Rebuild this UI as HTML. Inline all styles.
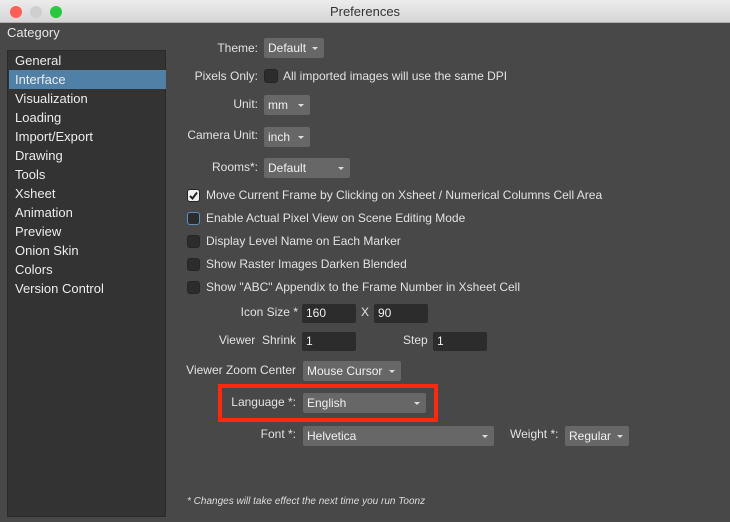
<!DOCTYPE html>
<html><head><style>
*{margin:0;padding:0;box-sizing:border-box}
body{width:730px;height:522px;background:#484848;font-family:"Liberation Sans",sans-serif;font-size:12px;color:#e2e2e2;position:relative;overflow:hidden}
.a{position:absolute;white-space:nowrap}
.tb{left:0;top:0;width:730px;height:23px;background:linear-gradient(#ececec,#d6d6d6);border-bottom:1px solid #b0b0b0;text-align:center;color:#333;font-size:13px;line-height:23px}
.dot{position:absolute;top:6px;width:12px;height:12px;border-radius:50%}
.side{left:7px;top:50px;width:159px;height:467px;background:#333;border:1px solid #2a2a2a}
.it{position:absolute;left:7px;line-height:19px;font-size:13px;color:#ececec}
.sel{position:absolute;left:1px;width:157px;height:19px;top:19px;background:#5180a6}
.lbl{text-align:right;line-height:20px}
.dd{background:#676767;border-radius:2px;height:20px;line-height:20px;padding-left:4px;color:#f0f0f0}
.dd:after{content:"";position:absolute;right:6px;top:9px;border-left:3px solid transparent;border-right:3px solid transparent;border-top:3px solid #ddd}
.in{background:#2c2c2c;border-radius:2px;height:19px;line-height:19px;padding-left:4px;color:#eee}
.cb{width:13px;height:13px;background:#2c2c2c;border-radius:3px;border:1px solid #262626}
.cb.on{background:#eee}
</style></head><body>
<div class="a tb">Preferences</div>
<div class="dot" style="left:10px;background:#fc5f57"></div>
<div class="dot" style="left:30px;background:#cfcfcf"></div>
<div class="dot" style="left:50px;background:#2ac840"></div>
<div class="a" style="left:7px;top:25px;line-height:16px;color:#e6e6e6;font-size:13px">Category</div>
<div class="a side">
<div class="sel"></div>
<div class="it" style="top:0">General</div>
<div class="it" style="top:19px">Interface</div>
<div class="it" style="top:38px">Visualization</div>
<div class="it" style="top:57px">Loading</div>
<div class="it" style="top:76px">Import/Export</div>
<div class="it" style="top:95px">Drawing</div>
<div class="it" style="top:114px">Tools</div>
<div class="it" style="top:133px">Xsheet</div>
<div class="it" style="top:152px">Animation</div>
<div class="it" style="top:171px">Preview</div>
<div class="it" style="top:190px">Onion Skin</div>
<div class="it" style="top:209px">Colors</div>
<div class="it" style="top:228px">Version Control</div>
</div>

<div class="a lbl" style="right:472px;top:38px">Theme:</div>
<div class="a dd" style="left:264px;top:38px;width:60px">Default</div>
<div class="a lbl" style="right:472px;top:66px">Pixels Only:</div>
<div class="a cb" style="left:264px;top:69px;width:14px;height:14px"></div>
<div class="a lbl" style="left:283px;top:66px">All imported images will use the same DPI</div>
<div class="a lbl" style="right:472px;top:94px">Unit:</div>
<div class="a dd" style="left:264px;top:95px;width:46px">mm</div>
<div class="a lbl" style="right:472px;top:125px">Camera Unit:</div>
<div class="a dd" style="left:264px;top:127px;width:46px">inch</div>
<div class="a lbl" style="right:472px;top:157px">Rooms*:</div>
<div class="a dd" style="left:264px;top:158px;width:86px">Default</div>

<div class="a cb on" style="left:187px;top:189px"></div>
<svg class="a" style="left:187px;top:189px" width="13" height="13"><path d="M3 7 L5.5 9.5 L10 3.5" stroke="#222" stroke-width="2" fill="none"/></svg>
<div class="a lbl" style="left:206px;top:185px">Move Current Frame by Clicking on Xsheet / Numerical Columns Cell Area</div>
<div class="a cb" style="left:187px;top:212px;border-color:#5a8ec0"></div>
<div class="a lbl" style="left:206px;top:208px">Enable Actual Pixel View on Scene Editing Mode</div>
<div class="a cb" style="left:187px;top:235px"></div>
<div class="a lbl" style="left:206px;top:231px">Display Level Name on Each Marker</div>
<div class="a cb" style="left:187px;top:258px"></div>
<div class="a lbl" style="left:206px;top:254px">Show Raster Images Darken Blended</div>
<div class="a cb" style="left:187px;top:281px"></div>
<div class="a lbl" style="left:206px;top:277px">Show "ABC" Appendix to the Frame Number in Xsheet Cell</div>

<div class="a lbl" style="right:432px;top:302px">Icon Size *</div>
<div class="a in" style="left:302px;top:304px;width:54px">160</div>
<div class="a lbl" style="left:361px;top:302px">X</div>
<div class="a in" style="left:374px;top:304px;width:54px">90</div>
<div class="a lbl" style="right:434px;top:330px">Viewer&nbsp; Shrink</div>
<div class="a in" style="left:302px;top:332px;width:54px">1</div>
<div class="a lbl" style="left:403px;top:330px">Step</div>
<div class="a in" style="left:433px;top:332px;width:54px">1</div>
<div class="a lbl" style="right:434px;top:360px">Viewer Zoom Center</div>
<div class="a dd" style="left:303px;top:361px;width:98px">Mouse Cursor</div>

<div class="a" style="left:218px;top:384px;width:220px;height:38px;border:4px solid #ff2a0e"></div>
<div class="a lbl" style="right:434px;top:392px">Language *:</div>
<div class="a dd" style="left:303px;top:393px;width:123px">English</div>
<div class="a lbl" style="right:434px;top:424px">Font *:</div>
<div class="a dd" style="left:303px;top:426px;width:191px">Helvetica</div>
<div class="a lbl" style="left:510px;top:424px">Weight *:</div>
<div class="a dd" style="left:565px;top:426px;width:64px">Regular</div>

<div class="a" style="left:187px;top:496px;font-size:10px;font-style:italic;color:#ddd">* Changes will take effect the next time you run Toonz</div>
</body></html>
